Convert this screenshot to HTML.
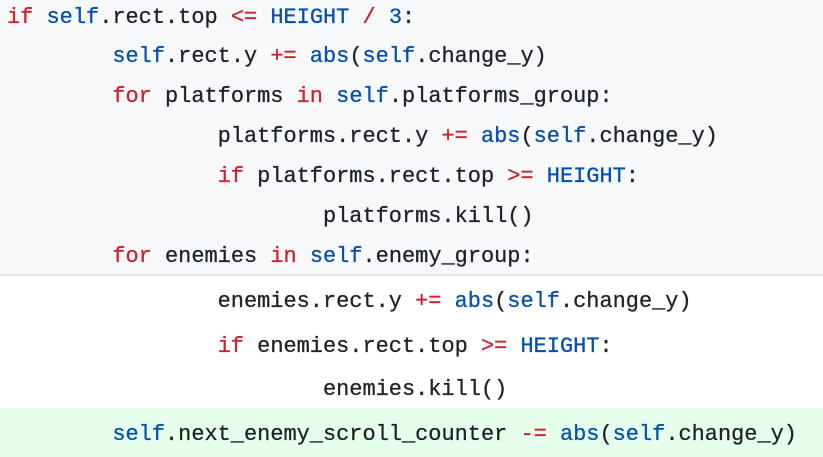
<!DOCTYPE html>
<html><head><style>
body{margin:0;width:823px;height:457px;overflow:hidden;background:#fff;font-family:"Liberation Mono",monospace;font-size:21.95px;color:#1f2328;-webkit-text-stroke:0.3px}
.top{position:absolute;left:0;top:0;width:823px;height:274px;background:#f6f8fa;border-bottom:2px solid #e4e6ea}
.add{position:absolute;left:0;top:408px;width:823px;height:49px;background:#e6ffec}
.l{position:absolute;left:7px;height:30px;line-height:30px;white-space:pre}
.k{color:#cf222e}.b{color:#0550ae}
</style></head><body>
<div class="top"></div><div class="add"></div>
<div class="l" style="top:3px"><span class="k">if</span> <span class="b">self</span>.rect.top <span class="k">&lt;=</span> <span class="b">HEIGHT</span> <span class="k">/</span> <span class="b">3</span>:</div>
<div class="l" style="top:42px">        <span class="b">self</span>.rect.y <span class="k">+=</span> <span class="b">abs</span>(<span class="b">self</span>.change_y)</div>
<div class="l" style="top:82px">        <span class="k">for</span> platforms <span class="k">in</span> <span class="b">self</span>.platforms_group:</div>
<div class="l" style="top:122px">                platforms.rect.y <span class="k">+=</span> <span class="b">abs</span>(<span class="b">self</span>.change_y)</div>
<div class="l" style="top:162px">                <span class="k">if</span> platforms.rect.top <span class="k">&gt;=</span> <span class="b">HEIGHT</span>:</div>
<div class="l" style="top:202px">                        platforms.kill()</div>
<div class="l" style="top:242px">        <span class="k">for</span> enemies <span class="k">in</span> <span class="b">self</span>.enemy_group:</div>
<div class="l" style="top:287px">                enemies.rect.y <span class="k">+=</span> <span class="b">abs</span>(<span class="b">self</span>.change_y)</div>
<div class="l" style="top:332px">                <span class="k">if</span> enemies.rect.top <span class="k">&gt;=</span> <span class="b">HEIGHT</span>:</div>
<div class="l" style="top:375px">                        enemies.kill()</div>
<div class="l" style="top:420px">        <span class="b">self</span>.next_enemy_scroll_counter <span class="k">-=</span> <span class="b">abs</span>(<span class="b">self</span>.change_y)</div>
</body></html>
